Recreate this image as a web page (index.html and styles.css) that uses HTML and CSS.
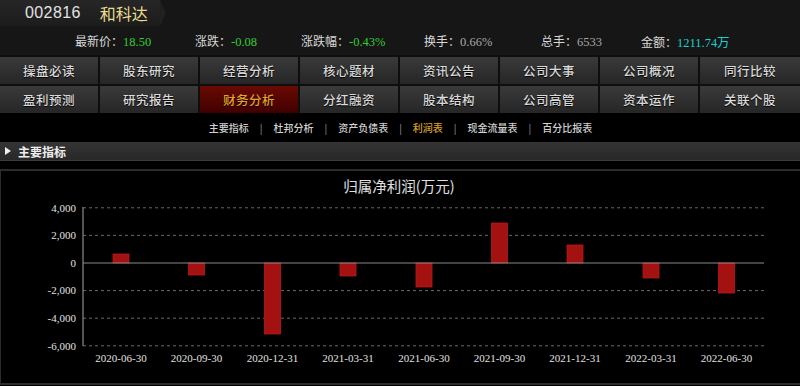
FILE: index.html
```html
<!DOCTYPE html>
<html lang="zh-CN">
<head>
<meta charset="utf-8">
<title>和科达 财务分析</title>
<link rel="stylesheet" href="styles.css">
</head>
<body>
<div class="page">
  <header class="top">
    <div class="tab">
      <span class="code">002816</span>
      <span class="name">和科达</span>
    </div>
  </header>
  <div class="info">
    <div class="item"><span class="lab">最新价：</span><span class="num green">18.50</span></div>
    <div class="item"><span class="lab">涨跌：</span><span class="num green">-0.08</span></div>
    <div class="item"><span class="lab">涨跌幅：</span><span class="num green">-0.43%</span></div>
    <div class="item"><span class="lab">换手：</span><span class="num gray">0.66%</span></div>
    <div class="item"><span class="lab">总手：</span><span class="num gray">6533</span></div>
    <div class="item"><span class="lab">金额：</span><span class="num cyan">1211.74万</span></div>
  </div>
  <nav class="nav">
    <a class="btn">操盘必读</a>
    <a class="btn">股东研究</a>
    <a class="btn">经营分析</a>
    <a class="btn">核心题材</a>
    <a class="btn">资讯公告</a>
    <a class="btn">公司大事</a>
    <a class="btn">公司概况</a>
    <a class="btn">同行比较</a>
    <a class="btn">盈利预测</a>
    <a class="btn">研究报告</a>
    <a class="btn active">财务分析</a>
    <a class="btn">分红融资</a>
    <a class="btn">股本结构</a>
    <a class="btn">公司高管</a>
    <a class="btn">资本运作</a>
    <a class="btn">关联个股</a>
  </nav>
  <div class="subnav">
    <a class="sub">主要指标</a><span class="sep">|</span>
    <a class="sub">杜邦分析</a><span class="sep">|</span>
    <a class="sub">资产负债表</a><span class="sep">|</span>
    <a class="sub cur">利润表</a><span class="sep">|</span>
    <a class="sub">现金流量表</a><span class="sep">|</span>
    <a class="sub">百分比报表</a>
  </div>
  <div class="section"><span class="tri"></span><span class="stitle">主要指标</span></div>
  <div class="panel">
    <svg class="chart" width="799" height="212" viewBox="0 171 799 212" xmlns="http://www.w3.org/2000/svg">
      <text class="ctitle" x="398" y="192" text-anchor="middle">归属净利润(万元)</text>
      <g class="grid">
        <line x1="82" y1="207.8" x2="763" y2="207.8"/>
        <line x1="82" y1="235.4" x2="763" y2="235.4"/>
        <line x1="82" y1="290.6" x2="763" y2="290.6"/>
        <line x1="82" y1="318.2" x2="763" y2="318.2"/>
        <line x1="82" y1="345.8" x2="763" y2="345.8"/>
      </g>
      <g class="ylab" text-anchor="end">
        <text x="75" y="211.5">4,000</text>
        <text x="75" y="239">2,000</text>
        <text x="75" y="266.7">0</text>
        <text x="75" y="294.3">-2,000</text>
        <text x="75" y="321.9">-4,000</text>
        <text x="75" y="349.5">-6,000</text>
      </g>
      <g class="bars">
        <rect x="112" y="254" width="16" height="9"/>
        <rect x="187.5" y="263" width="16" height="12"/>
        <rect x="263.5" y="263" width="16" height="71"/>
        <rect x="339" y="263" width="16" height="13"/>
        <rect x="415" y="263" width="16" height="24"/>
        <rect x="490.5" y="223" width="16" height="40"/>
        <rect x="566" y="245" width="16" height="18"/>
        <rect x="642" y="263" width="16" height="15"/>
        <rect x="717.5" y="263" width="16" height="30"/>
      </g>
      <line class="axis" x1="82" y1="207" x2="82" y2="346"/>
      <line class="axis" x1="82" y1="263" x2="763" y2="263"/>
      <g class="xlab" text-anchor="middle">
        <text x="120" y="362">2020-06-30</text>
        <text x="195.5" y="362">2020-09-30</text>
        <text x="271.5" y="362">2020-12-31</text>
        <text x="347" y="362">2021-03-31</text>
        <text x="423" y="362">2021-06-30</text>
        <text x="498.5" y="362">2021-09-30</text>
        <text x="574" y="362">2021-12-31</text>
        <text x="650" y="362">2022-03-31</text>
        <text x="725.5" y="362">2022-06-30</text>
      </g>
    </svg>
  </div>
</div>
</body>
</html>
```

FILE: styles.css
```css
html, body {
  margin: 0;
  padding: 0;
  background: #000;
}
.page {
  width: 800px;
  height: 386px;
  overflow: hidden;
  font-family: "Noto Sans CJK SC", sans-serif;
  color: #ddd;
}
.top {
  height: 28px;
  background: #161616;
}
.tab {
  position: relative;
  width: 160px;
  height: 26px;
  background: linear-gradient(#262626, #1c1c1c);
  display: flex;
  align-items: center;
  box-sizing: border-box;
  padding-left: 25px;
}
.tab::after {
  content: "";
  position: absolute;
  right: -6px;
  top: 0;
  border-top: 13px solid transparent;
  border-bottom: 13px solid transparent;
  border-left: 6px solid #202020;
}
.code {
  font-family: "Liberation Sans", sans-serif;
  font-size: 16px;
  color: #e2e2e2;
  letter-spacing: 0.4px;
}
.name {
  margin-left: 19px;
  font-size: 16px;
  color: #e6dc8e;
  font-weight: 400;
}
.info {
  height: 27px;
  background: #161616;
  display: grid;
  grid-template-columns: 120px 106px 123px 117px 100px 1fr;
  padding-left: 75px;
  align-items: center;
  font-size: 12px;
  box-sizing: border-box;
  padding-bottom: 1px;
}
.item {
  display: flex;
  align-items: baseline;
  white-space: nowrap;
}
.lab {
  color: #d8d8d8;
  font-size: 12px;
}
.num {
  font-family: "Liberation Serif", serif;
  font-size: 12.5px;
}
.green { color: #33cc33; }
.gray { color: #a8a8a8; }
.cyan { color: #1ccfd0; }
.nav {
  display: grid;
  grid-template-columns: repeat(8, 100px);
  background: #0e0e0e;
}
.btn {
  height: 27px;
  border-top: 2px solid #0e0e0e;
  border-right: 2px solid #0e0e0e;
  box-sizing: content-box;
  background: linear-gradient(#3a3a3a, #262626);
  display: flex;
  align-items: center;
  justify-content: center;
  font-size: 12.5px;
  font-weight: 500;
  color: #dadada;
  letter-spacing: 0.5px;
  text-shadow: 0 1px 1px #000;
}
.btn:nth-child(8n) {
  border-right: none;
}
.btn.active {
  background: linear-gradient(#6a0a02, #400000);
  color: #e6a32a;
}
.subnav {
  height: 29px;
  background: #000;
  display: flex;
  justify-content: center;
  align-items: center;
  font-size: 10px;
  padding-left: 1px;
}
.sub {
  color: #d0d0d0;
  font-weight: 500;
}
.sub.cur {
  color: #d9a125;
}
.sep {
  color: #9a9a9a;
  margin: 0 11px;
  font-size: 10px;
}
.section {
  height: 18px;
  background: linear-gradient(#343434, #282828);
  border-bottom: 1px solid #3c3c3c;
  display: flex;
  align-items: center;
  margin-bottom: 8px;
}
.tri {
  width: 0;
  height: 0;
  border-top: 4px solid transparent;
  border-bottom: 4px solid transparent;
  border-left: 6px solid #eee;
  margin-left: 5px;
}
.stitle {
  margin-left: 7px;
  font-size: 12px;
  font-weight: 700;
  color: #eee;
}
.panel {
  height: 212px;
  border-top: 2px solid #2c2c2c;
  border-left: 1px solid #2c2c2c;
  border-bottom: 2px solid #2c2c2c;
  background: #000;
}
.chart {
  display: block;
}
.ctitle {
  font-family: "Noto Sans CJK SC", sans-serif;
  font-size: 14.5px;
  fill: #e0e0e0;
}
.grid line {
  stroke: #6a6a6a;
  stroke-width: 1;
  stroke-dasharray: 3 3;
}
.axis {
  stroke: #8a8a8a;
  stroke-width: 1.2;
}
.ylab text, .xlab text {
  font-family: "Liberation Serif", serif;
  font-size: 11px;
  fill: #e0e0e0;
}
.bars rect {
  fill: #a31111;
  stroke: #b81a1a;
  stroke-width: 0.8;
}
```
